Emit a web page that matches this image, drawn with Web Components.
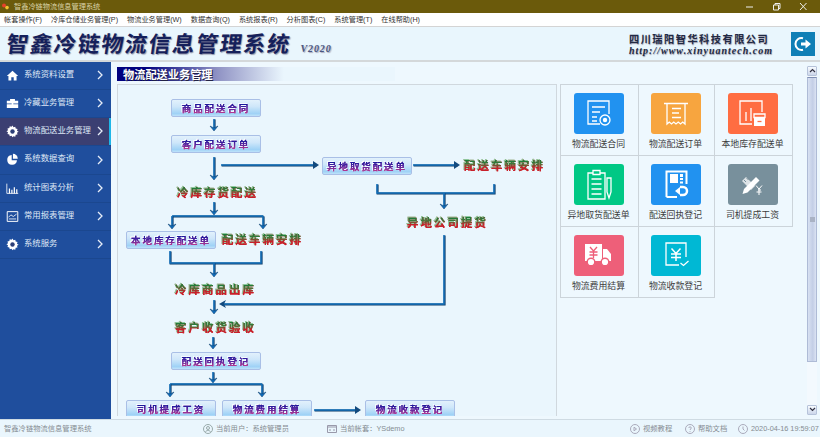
<!DOCTYPE html>
<html lang="zh-CN">
<head>
<meta charset="utf-8">
<title>智鑫冷链物流信息管理系统</title>
<style>
html, body { margin: 0; padding: 0; height: 100%; overflow: hidden; }
body { font-family: "Noto Sans CJK SC", "Liberation Sans", sans-serif; }
</style>
</head>
<body>
<wms-app></wms-app>

<script>
'use strict';

const CJK = '"Liberation Sans", "Noto Sans CJK SC", sans-serif';

function define_shadow(tag, html) {
    customElements.define(tag, class extends HTMLElement {
        constructor() {
            super();
            this.attachShadow({ mode: 'open' }).innerHTML = typeof html === 'function' ? html(this) : html;
        }
    });
}

//#region chrome

define_shadow('title-bar', `
<style>
:host { display: flex; align-items: center; height: 13px; background: #6b5a0b; color: #d9d2a8;
    font: 7.2px/13px ${CJK}; padding-left: 2px; }
svg { display: block; }
.name { margin-left: 5px; flex: 1; }
.ctl { display: flex; gap: 15px; padding-right: 10px; }
</style>
<svg width="7" height="7" viewBox="0 0 7 7"><circle cx="2" cy="2.500" r="2" fill="#e8402a"/><circle cx="5" cy="4.600" r="1.800" fill="#f4c430"/></svg>
<span class="name"><slot></slot></span>
<span class="ctl">
  <svg width="12" height="9" viewBox="0 0 12 9"><path d="M2 5h7" stroke="#eee" fill="none"/></svg>
  <svg width="12" height="9" viewBox="0 0 12 9"><path d="M2.500 3h5v5h-5zM4 3V1.500h5v5H7.500" stroke="#eee" fill="none"/></svg>
  <svg width="12" height="9" viewBox="0 0 12 9"><path d="M2 1l6.500 7M8.500 1L2 8" stroke="#eee" fill="none"/></svg>
</span>`);

define_shadow('menu-bar', `
<style>
:host { display: flex; height: 12px; padding: 0 0 1px 4px; gap: 9px; background: #fff; color: #333;
    font: 7.200px/13px ${CJK}; border-bottom: 1px solid #d4d4d4; white-space: nowrap; }
</style>
<slot></slot>`);

define_shadow('brand-header', `
<style>
:host { display: flex; align-items: stretch; height: 33px; background: #e9f6fd; border-bottom: 2px solid #d4d8da; }
.logo { display: flex; align-items: baseline; padding: 1px 0 0 7px; flex: 1; }
.sys { font: 700 22px/28px "Noto Sans CJK SC", sans-serif; letter-spacing: 1.700px; color: #15205a;
    text-shadow: 1px 1px 1px #8d93a8; transform: skewX(-8deg); white-space: nowrap; }
.ver { font: italic 700 10px/12px "Liberation Serif", serif; color: #4a5680; margin-left: 9px;
    text-shadow: 1px 1px 1px #aab; letter-spacing: .9px; }
.corp { width: 162px; padding-top: 5px; color: #222a44; }
.cn { font: 700 10.200px/13px "Noto Sans CJK SC", sans-serif; letter-spacing: 1.500px; text-shadow: .5px .5px 1px #99a; white-space: nowrap; }
.url { font: italic 700 10px/12px "Liberation Serif", serif; letter-spacing: 1px; text-shadow: .5px .5px 1px #99a; white-space: nowrap; }
.exit { width: 24px; height: 24px; margin: 5px 5px 0 0; background: #0f7fb6; display: flex; align-items: center; justify-content: center; }
</style>
<div class="logo"><span class="sys">智鑫冷链物流信息管理系统</span><span class="ver">V2020</span></div>
<div class="corp"><div class="cn">四川瑞阳智华科技有限公司</div><div class="url">http://www.xinyuantech.com</div></div>
<div class="exit"><svg width="18" height="18" viewBox="0 0 18 18"><path d="M9 3.200A6 6 0 1 0 9 14.800" stroke="#fff" stroke-width="2" fill="none"/><path d="M7 7.500h4.500V4.500L17 9l-5.500 4.500v-3H7z" fill="#fff"/></svg></div>`);

define_shadow('status-bar', `
<style>
:host { display: flex; align-items: center; height: 17px; background: #eaf6fd; border-top: 1px solid #cfdbe3;
    color: #858c92; font: 7.300px/17px ${CJK}; white-space: nowrap; padding-left: 4px; }
.left { width: 199px; }
.it { display: flex; align-items: center; gap: 3px; }
.user { width: 124px; }
.acct { width: 303px; }
.video { width: 55px; }
.help { width: 53px; }
svg { display: block; }
</style>
<div class="left">智鑫冷链物流信息管理系统</div>
<div class="it user"><svg width="10" height="10" viewBox="0 0 10 10" fill="none" stroke="#9aa"><circle cx="5" cy="5" r="4.500"/><circle cx="5" cy="4" r="1.500"/><path d="M2.500 8c.5-2 4.500-2 5 0"/></svg>当前用户：系统管理员</div>
<div class="it acct"><svg width="10" height="9" viewBox="0 0 10 9" fill="none" stroke="#99a"><path d="M.5 1.500h9v7h-9zM.5 3h9M3 5v2M7 5v2"/></svg>当前帐套：YSdemo</div>
<div class="it video"><svg width="10" height="10" viewBox="0 0 10 10" fill="none" stroke="#aab"><circle cx="5" cy="5" r="4.500"/><path d="M4 3.200l2.500 1.800L4 6.800z"/></svg>视频教程</div>
<div class="it help"><svg width="10" height="10" viewBox="0 0 10 10" fill="none" stroke="#aab"><circle cx="5" cy="5" r="4.500"/><path d="M3.800 4c0-1.600 2.500-1.600 2.500 0 0 1-1.300 1-1.300 2M5 7v.8"/></svg>帮助文档</div>
<div class="it"><svg width="10" height="10" viewBox="0 0 10 10" fill="none" stroke="#aab"><circle cx="5" cy="5" r="4.500"/><path d="M5 2.500V5l1.500 1.500"/></svg>2020-04-16 19:59:07</div>`);

//#endregion

//#region sidebar

const NAV_ICONS = {
    home: '<path d="M8 2L1 8.500h2V14h3.500v-4h3v4H13V8.500h2z" fill="#fff"/>',
    case: '<path d="M6 3h4v1.500H6zM5 4.500V2.500h6v2h4v3.500H1V4.500zM1 9h14v4.500H1zM7 8h2v2.500H7z" fill="#fff"/>',
    gear: '<path d="M8 1l1.200 2 2.200-.7.500 2.300 2.300.5-.7 2.200 2 1.200-2 1.200.7 2.200-2.300.5-.5 2.300-2.200-.7L8 15.500l-1.200-2-2.200.7-.5-2.300-2.300-.5.7-2.200-2-1.200 2-1.200-.7-2.200 2.300-.5.5-2.300 2.200.7z" fill="#fff" transform="translate(0 -.3)"/><circle cx="8" cy="8" r="2.700" fill="#2c3f78"/>',
    pie: '<path d="M7 2.500a6 6 0 1 0 6.500 6.500H7z" fill="#fff"/><path d="M8.500 1a6 6 0 0 1 6 6h-6z" fill="#fff"/>',
    bars: '<path d="M1 2v12h14" stroke="#fff" fill="none"/><path d="M3.500 8h1.500v6H3.500zM6.500 9.500H8V14H6.500zM9.500 6.500H11V14H9.500zM12.500 9H14v5h-1.500z" fill="#fff"/>',
    report: '<path d="M1.500 2h13v12h-13z" stroke="#fff" stroke-width="1.200" fill="none"/><path d="M3 9l3-3 3 2 4-3M3.500 11h9" stroke="#fff" fill="none"/>',
};

define_shadow('nav-item', host => `
<style>
:host { display: flex; align-items: center; height: 27px; padding-left: 6px; color: #dfe8f6;
    font: 8.400px/27px ${CJK}; border-bottom: 1px solid #1b478f; position: relative; }
:host([active]) { background: #3b3f72; }
:host([active])::after { content: ""; position: absolute; right: 0; top: 0; bottom: 0; width: 2px; background: #1fb6e8; }
svg.ic { margin-right: 5px; flex: none; }
.t { flex: 1; white-space: nowrap; margin-top: -2px; }
svg.ch { margin-right: 8px; flex: none; }
</style>
<svg class="ic" width="13" height="13" viewBox="0 0 16 16">${NAV_ICONS[host.getAttribute('icon')] || ''}</svg>
<span class="t"><slot></slot></span>
<svg class="ch" width="6" height="10" viewBox="0 0 6 10"><path d="M1 1l4 4-4 4" stroke="#e6edf8" stroke-width="1.300" fill="none"/></svg>`);

define_shadow('side-nav', `
<style>
:host { display: block; width: 111px; background: #1f4e9d; flex: none; }
</style>
<slot></slot>`);

//#endregion

//#region flow diagram

define_shadow('flow-node', `
<style>
:host { position: absolute; box-sizing: border-box; width: 90px; height: 18px; padding-top: 1px; border: 1px solid #a9bfe6; border-radius: 2px;
    background: linear-gradient(#e2f1fc 0%, #cfe7fa 40%, #9fd2f6 85%, #bfe2fa 100%); display: flex; justify-content: center; align-items: flex-start; }
.t { display: block; height: 14px; font: 700 9.500px/14px "Noto Sans CJK SC", sans-serif; letter-spacing: 1.900px; white-space: nowrap;
    background: linear-gradient(180deg, #1c1a9e 25%, #5a25a0 55%, #b8388e 85%); -webkit-background-clip: text; background-clip: text; color: transparent;
    filter: drop-shadow(.4px .3px 0 #6a2a9a) drop-shadow(.5px .5px 0 #f2d4ee) drop-shadow(-.4px -.4px 0 rgba(255,255,255,.8)); }
</style>
<span class="t"><slot></slot></span>`);

define_shadow('flow-label', `
<style>
:host { position: absolute; font: 700 11.500px/14px "Noto Sans CJK SC", sans-serif; letter-spacing: 2px; white-space: nowrap;
    background: linear-gradient(180deg, #1d7d3a 22%, #3f7a3a 42%, #c81f2a 68%); -webkit-background-clip: text; background-clip: text; color: transparent;
    filter: drop-shadow(.5px .4px 0 #c4242c) drop-shadow(-.4px -.4px 0 #8fc79c) drop-shadow(.4px .4px 0 #f7cccc); }
</style>
<slot></slot>`);

// arrows as [x, y1, y2] down, wires as plain polylines, all in page px
const DOWN = [[214, 118, 130], [214, 156, 179], [214, 201, 214], [172, 215, 228], [263, 215, 228], [214, 262, 276],
    [214, 299, 313], [213, 336, 348], [213, 371, 382], [170, 383, 396], [262, 383, 396], [444, 192, 208]];
const RIGHT = [[221, 319, 164], [413, 460, 164], [314, 361, 409]];
const WIRES = ['M172 215H263', 'M170 250V262H261V250', 'M170 383H262', 'M377 183V192H494V183', 'M444 234V303H222'];

function wire_svg() {
    const ox = 118, oy = 84;
    let out = '';
    const line = d => `<path d="${d}" fill="none" stroke="#0d3a66" stroke-width="2" transform="translate(.6 .4)"/><path d="${d}" fill="none" stroke="#1673bd" stroke-width="1.500"/>`;
    WIRES.forEach(d => { out += line(d); });
    DOWN.forEach(([x, y1, y2]) => {
        out += line(`M${x} ${y1}V${y2 - 3}`);
        out += `<path d="M${x - 4} ${y2 - 5}L${x} ${y2}L${x + 4} ${y2 - 5}L${x} ${y2 - 3}z" fill="#0f6fc0" stroke="#0d3a66" stroke-width=".5"/>`;
    });
    RIGHT.forEach(([x1, x2, y]) => {
        out += line(`M${x1} ${y}H${x2 - 3}`);
        out += `<path d="M${x2 - 6} ${y - 4}L${x2} ${y}L${x2 - 6} ${y + 4}z" fill="#124a7e"/>`;
    });
    out += `<path d="M219 303L226 299L224 303L226 307z" fill="#124a7e"/>`;
    return `<svg width="438" height="331" viewBox="${ox} ${oy} 438 331">${out}</svg>`;
}

define_shadow('flow-diagram', `
<style>
:host { display: block; position: relative; box-sizing: border-box; width: 440px; height: 332px; flex: none; overflow: hidden;
    background: #eaf6fd; border: solid #d0d8de; border-width: 1px 1px 0 1px; }
svg { position: absolute; left: 0; top: 0; }
</style>
${wire_svg()}
<slot></slot>`);

//#endregion

//#region tiles

const OUT = 'fill="none" stroke="#fff" stroke-width="1.300"';
const TILE_ICONS = {
    contract: `<path d="M26 31H14V8H35V21" ${OUT}/><path d="M18 14h13M18 19h8M18 24h5M18 28h5" ${OUT}/><circle cx="31" cy="27" r="5" ${OUT}/><circle cx="31" cy="27" r="2.200" fill="#fff"/>`,
    order: `<path d="M13 10.500h24M16 10.500V31l2.250-2 2.250 2 2.250-2 2.250 2 2.250-2 2.250 2 2.250-2 2.250 2V10.500" ${OUT}/><path d="M21 15.500h9M21 20h7M21 24.500h9" ${OUT}/>`,
    stock: `<path d="M24 31H12V8H34V19" ${OUT}/><path d="M18 28V19M23 28V15" ${OUT}/><path d="M26 21h11v3.500H26z" ${OUT}/><path d="M26 25h11v8H26z" fill="#fff"/><path d="M29.500 28.500h4" stroke="#ff6d42" stroke-width="1.300"/>`,
    pick: `<path d="M14 9h17v26H14z" ${OUT}/><path d="M19 6.500h7v4h-7z" fill="#00c885" stroke="#fff" stroke-width="1.300"/><path d="M17.500 15h10M17.500 20h10M17.500 25h10M17.500 30h10" ${OUT}/><path d="M33 14h4v14l-2 6-2-6z" ${OUT}/>`,
    receipt: `<path d="M15.500 33V7.500H35.500V20M15.500 33H26" fill="none" stroke="#fff" stroke-width="2"/><path d="M19 10h8v9h-8z" fill="#fff"/><path d="M29 10h3v3h-3zM29 14h3v2h-3zM29 17.500h3v2h-3z" fill="#fff"/><path d="M29 23h3a4 4 0 0 1 0 8h-3" fill="none" stroke="#fff" stroke-width="2.500"/><path d="M24 27l5-4v8z" fill="#fff"/>`,
    wage: `<path d="M16 25l12-12 3.500 3.500-12 12-5 1.500z" fill="#fff"/><path d="M14 17l4-4 9 9-4 4z" fill="#fff" opacity=".75"/><path d="M16 16l2 2M18.500 14l2 2" stroke="#78909c"/><path d="M28 21.500l3 3.500 3-3.500M30 26h3M31 25v6M28.500 28h5" fill="none" stroke="#fff"/>`,
    truck: `<path d="M11 9h17v17H11z" fill="#fff"/><path d="M29 14h4l4 5v7h-8z" fill="#fff"/><circle cx="17" cy="27" r="3.800" fill="#fff" stroke="#ee5f79" stroke-width="1.400"/><circle cx="31" cy="27" r="3.800" fill="#fff" stroke="#ee5f79" stroke-width="1.400"/><path d="M16 12l3.500 4 3.500-4M15.500 17h8M15.500 20h8M19.500 16v7" fill="none" stroke="#ee5f79" stroke-width="1.300"/>`,
    collect: `<path d="M35 22V8H15V30H28" ${OUT}/><path d="M20.500 13.500l4.500 5 4.500-5M20 19h10M20 22.500h10M25 18.500v7.500" fill="none" stroke="#fff" stroke-width="1.500"/><path d="M29.500 28l3 2.500 5-4.500" ${OUT}/>`,
};

define_shadow('func-tile', host => `
<style>
:host { display: flex; flex-direction: column; align-items: center; box-sizing: border-box; padding: 8px 2px 0 0;
    border: solid #ccd4da; border-width: 0 1px 1px 0; color: #3d3d3d; font: 8.900px/12px ${CJK}; white-space: nowrap; }
.ic { width: 50px; height: 41px; border-radius: 3px; margin-bottom: 4px; background: ${host.getAttribute('color')}; }
svg { display: block; }
</style>
<div class="ic"><svg width="50" height="41" viewBox="0 0 50 41">${TILE_ICONS[host.getAttribute('icon')] || ''}</svg></div>
<slot></slot>`);

define_shadow('func-grid', `
<style>
:host { display: grid; grid-template-columns: 78px 76px 78px; grid-auto-rows: 71px; align-self: flex-start;
    border: solid #ccd4da; border-width: 1px 0 0 1px; height: 213px; }
</style>
<slot></slot>`);

define_shadow('v-scroll', `
<style>
:host { display: flex; flex-direction: column; width: 10px; height: 349px; background: #f3f9fe; flex: none; }
.btn { height: 10px; flex: none; display: flex; align-items: center; justify-content: center; box-sizing: border-box;
    background: linear-gradient(#f7fbff, #ccd6ea); border: 1px solid #b6c3da; border-radius: 1px; }
.thumb { height: 285px; margin-top: 1px; flex: none; box-sizing: border-box; border: 1px solid #aebbd6; border-top-color: #7f8fb4;
    background: linear-gradient(90deg, #d8e1f2, #c3cee6 60%, #dbe3f3); display: flex; align-items: center; justify-content: center; }
.grip { width: 5px; height: 5px; background: #a9b2c4; }
.gap { flex: 1; }
svg { display: block; }
</style>
<div class="btn"><svg width="7" height="5" viewBox="0 0 7 5"><path d="M1 4l2.500-2.500L6 4" stroke="#334" stroke-width="1.200" fill="none"/></svg></div>
<div class="thumb"><div class="grip"></div></div>
<div class="gap"></div>
<div class="btn"><svg width="7" height="5" viewBox="0 0 7 5"><path d="M1 1l2.500 2.500L6 1" stroke="#334" stroke-width="1.200" fill="none"/></svg></div>`);

define_shadow('section-title', `
<style>
:host { display: block; height: 14px; width: 272px; padding-left: 6px; color: #fff;
    font: 700 11.200px/14px "Noto Sans CJK SC", sans-serif; white-space: nowrap; text-shadow: 1px 1px 0 #224;
    background: linear-gradient(90deg, #00007e 0%, #00007e 10%, #8f92c4 36%, #eaf6fd 60%); }
</style>
<slot></slot>`);

//#endregion

define_shadow('wms-app', `
<style>
:host { display: flex; flex-direction: column; width: 820px; height: 437px; overflow: hidden; background: #eef8fe; }
.body { display: flex; height: 358px; }
.main { flex: 1; display: flex; padding: 5px 3px 0 6px; box-sizing: border-box; }
.col { display: flex; flex-direction: column; width: 683px; }
.gap3 { height: 3px; flex: none; }
.row { display: flex; gap: 3px; }
.sb { margin: -1px 0 0 7px; }
</style>
<title-bar>智鑫冷链物流信息管理系统</title-bar>
<menu-bar>
  <span>帐套操作(F)</span><span>冷库仓储业务管理(P)</span><span>物流业务管理(W)</span><span>数据查询(Q)</span>
  <span>系统报表(R)</span><span>分析图表(C)</span><span>系统管理(T)</span><span>在线帮助(H)</span>
</menu-bar>
<brand-header></brand-header>
<div class="body">
  <side-nav>
    <nav-item icon="home">系统资料设置</nav-item>
    <nav-item icon="case">冷藏业务管理</nav-item>
    <nav-item icon="gear" active>物流配送业务管理</nav-item>
    <nav-item icon="pie" style="height:28px">系统数据查询</nav-item>
    <nav-item icon="bars">统计图表分析</nav-item>
    <nav-item icon="report">常用报表管理</nav-item>
    <nav-item icon="gear">系统服务</nav-item>
  </side-nav>
  <div class="main">
    <div class="col">
      <section-title>物流配送业务管理</section-title>
      <div class="gap3"></div>
      <div class="row">
        <flow-diagram>
          <flow-node style="left:53px;top:14px">商品配送合同</flow-node>
          <flow-node style="left:53px;top:50px">客户配送订单</flow-node>
          <flow-node style="left:204px;top:72px">异地取货配送单</flow-node>
          <flow-label style="left:59px;top:100px">冷库存货配送</flow-label>
          <flow-label style="left:346px;top:73px">配送车辆安排</flow-label>
          <flow-node style="left:8px;top:146px">本地库存配送单</flow-node>
          <flow-label style="left:104px;top:147px">配送车辆安排</flow-label>
          <flow-label style="left:289px;top:130px">异地公司提货</flow-label>
          <flow-label style="left:57px;top:197px">冷库商品出库</flow-label>
          <flow-label style="left:57px;top:235px">客户收货验收</flow-label>
          <flow-node style="left:53px;top:267px">配送回执登记</flow-node>
          <flow-node style="left:8px;top:315px">司机提成工资</flow-node>
          <flow-node style="left:104px;top:315px">物流费用结算</flow-node>
          <flow-node style="left:247px;top:315px">物流收款登记</flow-node>
        </flow-diagram>
        <func-grid>
          <func-tile icon="contract" color="#2192f0">物流配送合同</func-tile>
          <func-tile icon="order" color="#f7a53f">物流配送订单</func-tile>
          <func-tile icon="stock" color="#ff6d42">本地库存配送单</func-tile>
          <func-tile icon="pick" color="#00c885">异地取货配送单</func-tile>
          <func-tile icon="receipt" color="#2192f0">配送回执登记</func-tile>
          <func-tile icon="wage" color="#78909c">司机提成工资</func-tile>
          <func-tile icon="truck" color="#ee5f79">物流费用结算</func-tile>
          <func-tile icon="collect" color="#00b8d4">物流收款登记</func-tile>
        </func-grid>
      </div>
    </div>
    <v-scroll class="sb"></v-scroll>
  </div>
</div>
<status-bar></status-bar>`);
</script>
</body>
</html>
